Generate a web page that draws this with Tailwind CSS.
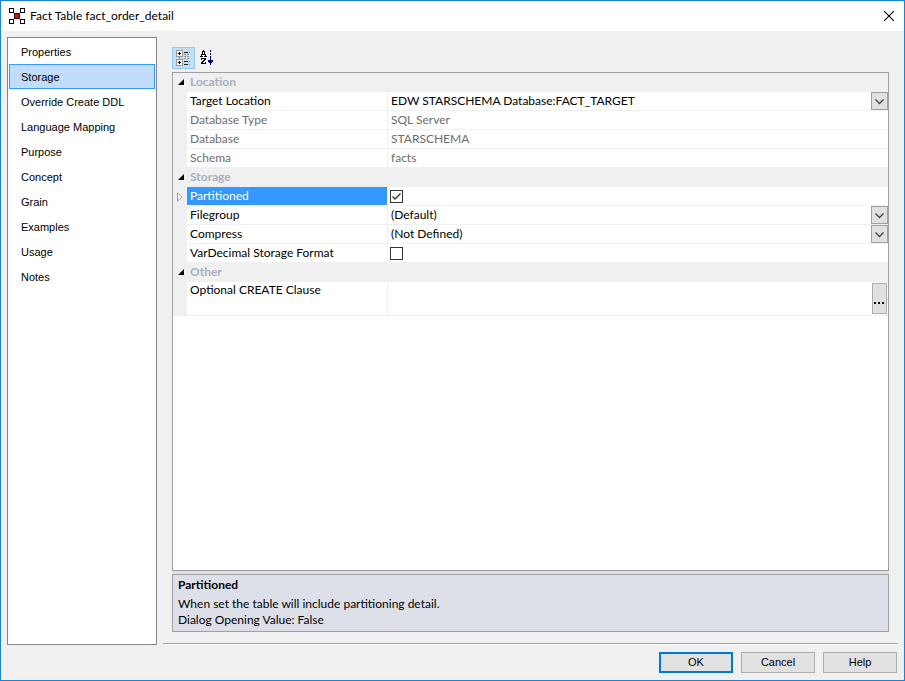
<!DOCTYPE html>
<html lang="en">
<head>
<meta charset="utf-8">
<title>Fact Table fact_order_detail</title>
<script src="https://cdn.jsdelivr.net/npm/@tailwindcss/browser@4"></script>
</head>
<body class="flex h-screen flex-col overflow-hidden border border-[#1883d7] bg-[#f0f0f0] font-['Lato','Open_Sans',sans-serif] text-[12px] text-black">
  <header class="flex h-[30px] shrink-0 items-center bg-white pr-[10px] pl-2">
    <svg class="mr-[5px] size-4" viewBox="0 0 16 16" shape-rendering="crispEdges" aria-hidden="true">
      <g fill="#fff" stroke="#000"><path d="M.5 .5h4v4h-4zM11.5 .5h4v4h-4zM.5 11.5h4v4h-4zM11.5 11.5h4v4h-4z"/></g>
      <path d="M5 5h1v1h-1zM10 5h1v1h-1zM5 10h1v1h-1zM10 10h1v1h-1z"/>
      <path d="M5.500 5.500h5v5h-5z" fill="#c81414" stroke="#3a0a0a"/>
    </svg>
    <h1 class="flex-1">Fact Table fact_order_detail</h1>
    <button class="size-[10px]" aria-label="Close">
      <svg viewBox="0 0 10 10" class="block size-[10px]"><path d="M0 0L10 10M10 0L0 10" stroke="#000" stroke-width="1.100"/></svg>
    </button>
  </header>

  <main class="flex min-h-0 flex-1 pt-[6px] pl-[6px]">
    <nav class="mb-[35px] w-[150px] shrink-0 border border-[#828790] bg-white p-px font-['Liberation_Sans',Arial,sans-serif] text-[11px]" aria-label="Sections">
      <a href="#properties" class="flex h-[25px] items-center border border-transparent pt-px pl-[11px]">Properties</a>
      <a href="#storage" aria-current="page" class="flex h-[25px] items-center border border-[#3399ff] bg-[#c2dcfb] pt-px pl-[11px]">Storage</a>
      <a href="#ddl" class="flex h-[25px] items-center border border-transparent pt-px pl-[11px]">Override Create DDL</a>
      <a href="#language" class="flex h-[25px] items-center border border-transparent pt-px pl-[11px]">Language Mapping</a>
      <a href="#purpose" class="flex h-[25px] items-center border border-transparent pt-px pl-[11px]">Purpose</a>
      <a href="#concept" class="flex h-[25px] items-center border border-transparent pt-px pl-[11px]">Concept</a>
      <a href="#grain" class="flex h-[25px] items-center border border-transparent pt-px pl-[11px]">Grain</a>
      <a href="#examples" class="flex h-[25px] items-center border border-transparent pt-px pl-[11px]">Examples</a>
      <a href="#usage" class="flex h-[25px] items-center border border-transparent pt-px pl-[11px]">Usage</a>
      <a href="#notes" class="flex h-[25px] items-center border border-transparent pt-px pl-[11px]">Notes</a>
    </nav>

    <div class="flex min-w-0 flex-1 flex-col pt-[10px] pr-[6px] pl-[6px]">
      <section class="flex min-h-0 flex-1 flex-col pr-[9px] pl-[9px]">
        <div class="flex h-[25px] shrink-0">
          <button class="flex h-[22px] w-[23px] items-center justify-center border border-[#90c8f6] bg-[#c4def5]" aria-label="Categorized">
            <svg class="h-4 w-[15px]" viewBox="0 0 15 16" shape-rendering="crispEdges" aria-hidden="true">
              <path d="M3.500 7v2" stroke="#999"/>
              <path d="M.5 .5h6v6h-6zM.5 9.500h6v6h-6z" fill="#fff" stroke="#999"/>
              <path d="M2 3.500h3M3.500 2v3M2 12.500h3M3.500 11v3" stroke="#000"/>
              <path d="M8 2.500h4M8 11.500h4M8 14.500h4" stroke="#222"/>
              <path d="M8 4.500h6M8 6.500h6M8 8.500h6M13 2.500h1M13 11.500h1M13 14.500h1" stroke="#999" stroke-dasharray="2 1"/>
            </svg>
          </button>
          <button class="flex h-[22px] w-[23px] items-center justify-center" aria-label="Alphabetical">
            <svg class="size-4" viewBox="0 0 16 16" shape-rendering="crispEdges" aria-hidden="true">
              <path d="M4 0h1v1h-1zM3 1h3v1h-3zM3 2h1v2h-1zM5 2h1v2h-1zM2 4h5v1h-5zM2 5h1v1h-1zM6 5h1v1h-1zM1 6h3v1h-3zM5 6h3v1h-3z"/>
              <path d="M2 8h5v1h-5zM2 9h1v1h-1zM5 9h2v1h-2zM4 10h2v1h-2zM3 11h2v1h-2zM2 12h2v1h-2zM6 12h1v1h-1zM2 13h5v1h-5z"/>
              <path d="M11 0h1v2h-1zM11 3h1v2h-1zM11 6h1v4h-1zM9 10h5v1h-5zM9 11h5v1h-5zM10 12h3v1h-3zM11 13h1v2h-1z" fill="#00008b"/>
            </svg>
          </button>
        </div>

        <div class="min-h-0 flex-1 overflow-hidden border border-[#a0a0a0] bg-white">
          <table class="w-full table-fixed border-separate border-spacing-0 text-left leading-[18px]">
            <colgroup><col class="w-[14px]"><col class="w-[201px]"><col></colgroup>
            <tbody>
              <tr class="h-[19px] bg-[#f0f0f0]">
                <td class="border-b border-[#f0f0f0] p-0"><svg class="ml-1 size-2" viewBox="0 0 8 8"><path d="M7 1v6H1z"/></svg></td>
                <th colspan="2" class="border-b border-[#f0f0f0] p-0 pl-[3px] font-bold text-[#a7b1c0]">Location</th>
              </tr>
              <tr class="h-[19px]">
                <td class="bg-[#f0f0f0] p-0"></td>
                <th class="border-r border-b border-[#f0f0f0] p-0 pl-[3px] font-normal"><label for="target">Target Location</label></th>
                <td class="border-b border-[#f0f0f0] p-0">
                  <div class="relative h-[18px]">
                    <select id="target" class="block h-[18px] w-full appearance-none bg-transparent pl-[3px]"><option>EDW STARSCHEMA Database:FACT_TARGET</option></select>
                    <svg class="pointer-events-none absolute top-0 right-0 h-[18px] w-[17px] border border-[#a0a0a0] bg-[#e1e1e1]" viewBox="0 0 15 16"><path d="M3.500 6.500L7.500 10.500L11.500 6.500" fill="none" stroke="#444" stroke-width="1.300"/></svg>
                  </div>
                </td>
              </tr>
              <tr class="h-[19px] text-[#6d6d6d]">
                <td class="bg-[#f0f0f0] p-0"></td>
                <th class="border-r border-b border-[#f0f0f0] p-0 pl-[3px] font-normal">Database Type</th>
                <td class="border-b border-[#f0f0f0] p-0 pl-[3px]">SQL Server</td>
              </tr>
              <tr class="h-[19px] text-[#6d6d6d]">
                <td class="bg-[#f0f0f0] p-0"></td>
                <th class="border-r border-b border-[#f0f0f0] p-0 pl-[3px] font-normal">Database</th>
                <td class="border-b border-[#f0f0f0] p-0 pl-[3px]">STARSCHEMA</td>
              </tr>
              <tr class="h-[19px] text-[#6d6d6d]">
                <td class="bg-[#f0f0f0] p-0"></td>
                <th class="border-r border-b border-[#f0f0f0] p-0 pl-[3px] font-normal">Schema</th>
                <td class="border-b border-[#f0f0f0] p-0 pl-[3px]">facts</td>
              </tr>
              <tr class="h-[19px] bg-[#f0f0f0]">
                <td class="border-b border-[#f0f0f0] p-0"><svg class="ml-1 size-2" viewBox="0 0 8 8"><path d="M7 1v6H1z"/></svg></td>
                <th colspan="2" class="border-b border-[#f0f0f0] p-0 pl-[3px] font-bold text-[#a7b1c0]">Storage</th>
              </tr>
              <tr class="h-[19px]">
                <td class="bg-[#f0f0f0] p-0"><svg class="ml-1 h-[10px] w-[6px]" viewBox="0 0 6 10"><path d="M.5 1v8L5 5z" fill="#fff" stroke="#a0a0a0"/></svg></td>
                <th class="border-r border-b border-[#f0f0f0] bg-[#3399ff] bg-clip-padding p-0 pl-[3px] font-normal text-white"><label for="partitioned">Partitioned</label></th>
                <td class="border-b border-[#f0f0f0] p-0 pl-[2px]">
                  <span class="relative flex h-[18px] items-center">
                    <input id="partitioned" type="checkbox" checked class="peer size-[13px] appearance-none border border-[#333] bg-white">
                    <svg class="pointer-events-none absolute left-0 hidden size-[13px] peer-checked:block" viewBox="0 0 13 13"><path d="M2.500 6.500L5 9L10.500 3.500" fill="none" stroke="#333" stroke-width="1.400"/></svg>
                  </span>
                </td>
              </tr>
              <tr class="h-[19px]">
                <td class="bg-[#f0f0f0] p-0"></td>
                <th class="border-r border-b border-[#f0f0f0] p-0 pl-[3px] font-normal"><label for="filegroup">Filegroup</label></th>
                <td class="border-b border-[#f0f0f0] p-0">
                  <div class="relative h-[18px]">
                    <select id="filegroup" class="block h-[18px] w-full appearance-none bg-transparent pl-[3px]"><option>(Default)</option></select>
                    <svg class="pointer-events-none absolute top-0 right-0 h-[18px] w-[17px] border border-[#a0a0a0] bg-[#e1e1e1]" viewBox="0 0 15 16"><path d="M3.500 6.500L7.500 10.500L11.500 6.500" fill="none" stroke="#444" stroke-width="1.300"/></svg>
                  </div>
                </td>
              </tr>
              <tr class="h-[19px]">
                <td class="bg-[#f0f0f0] p-0"></td>
                <th class="border-r border-b border-[#f0f0f0] p-0 pl-[3px] font-normal"><label for="compress">Compress</label></th>
                <td class="border-b border-[#f0f0f0] p-0">
                  <div class="relative h-[18px]">
                    <select id="compress" class="block h-[18px] w-full appearance-none bg-transparent pl-[3px]"><option>(Not Defined)</option></select>
                    <svg class="pointer-events-none absolute top-0 right-0 h-[18px] w-[17px] border border-[#a0a0a0] bg-[#e1e1e1]" viewBox="0 0 15 16"><path d="M3.500 6.500L7.500 10.500L11.500 6.500" fill="none" stroke="#444" stroke-width="1.300"/></svg>
                  </div>
                </td>
              </tr>
              <tr class="h-[19px]">
                <td class="bg-[#f0f0f0] p-0"></td>
                <th class="border-r border-b border-[#f0f0f0] p-0 pl-[3px] font-normal"><label for="vardecimal">VarDecimal Storage Format</label></th>
                <td class="border-b border-[#f0f0f0] p-0 pl-[2px]">
                  <span class="relative flex h-[18px] items-center">
                    <input id="vardecimal" type="checkbox" class="peer size-[13px] appearance-none border border-[#333] bg-white">
                    <svg class="pointer-events-none absolute left-0 hidden size-[13px] peer-checked:block" viewBox="0 0 13 13"><path d="M2.500 6.500L5 9L10.500 3.500" fill="none" stroke="#333" stroke-width="1.400"/></svg>
                  </span>
                </td>
              </tr>
              <tr class="h-[19px] bg-[#f0f0f0]">
                <td class="border-b border-[#f0f0f0] p-0"><svg class="ml-1 size-2" viewBox="0 0 8 8"><path d="M7 1v6H1z"/></svg></td>
                <th colspan="2" class="border-b border-[#f0f0f0] p-0 pl-[3px] font-bold text-[#a7b1c0]">Other</th>
              </tr>
              <tr class="h-[34px]">
                <td class="bg-[#f0f0f0] p-0"></td>
                <th class="border-r border-b border-[#f0f0f0] p-0 pl-[3px] align-top font-normal leading-4"><label for="clause">Optional CREATE Clause</label></th>
                <td class="border-b border-[#f0f0f0] p-0">
                  <div class="flex h-[33px] items-center pr-px">
                    <textarea id="clause" class="h-[31px] min-w-0 flex-1 resize-none pl-[3px] leading-4"></textarea>
                    <button class="flex h-[31px] w-[15px] items-end justify-center border border-[#adadad] bg-[#e1e1e1] pb-[9px]" aria-label="Edit clause">
                      <svg class="h-[2px] w-[11px]" viewBox="0 0 11 2" shape-rendering="crispEdges"><path d="M0 0h2v2H0zM4 0h2v2H4zM8 0h2v2H8z"/></svg>
                    </button>
                  </div>
                </td>
              </tr>
            </tbody>
          </table>
        </div>
        <div class="h-[3px] shrink-0 bg-[#dde0e9]"></div>
        <div class="h-[58px] shrink-0 border border-[#a0a0a0] bg-[#dde0e9] pt-[2px] pl-[5px] leading-4">
          <h2 class="mb-[3px] font-bold">Partitioned</h2>
          <p>When set the table will include partitioning detail.</p>
          <p>Dialog Opening Value: False</p>
        </div>
      </section>

      <footer class="mt-[11px] flex shrink-0 justify-end gap-2 border-t border-[#a0a0a0] pt-2 pr-px pb-[7px] font-['Liberation_Sans',Arial,sans-serif] text-[11px] shadow-[inset_0_1px_0_#fff]">
        <button class="h-[21px] w-[74px] border-2 border-[#0078d7] bg-[#e1e1e1]">OK</button>
        <button class="h-[21px] w-[74px] border border-[#adadad] bg-[#e1e1e1]">Cancel</button>
        <button class="h-[21px] w-[74px] border border-[#adadad] bg-[#e1e1e1]">Help</button>
      </footer>
    </div>
  </main>
</body>
</html>
